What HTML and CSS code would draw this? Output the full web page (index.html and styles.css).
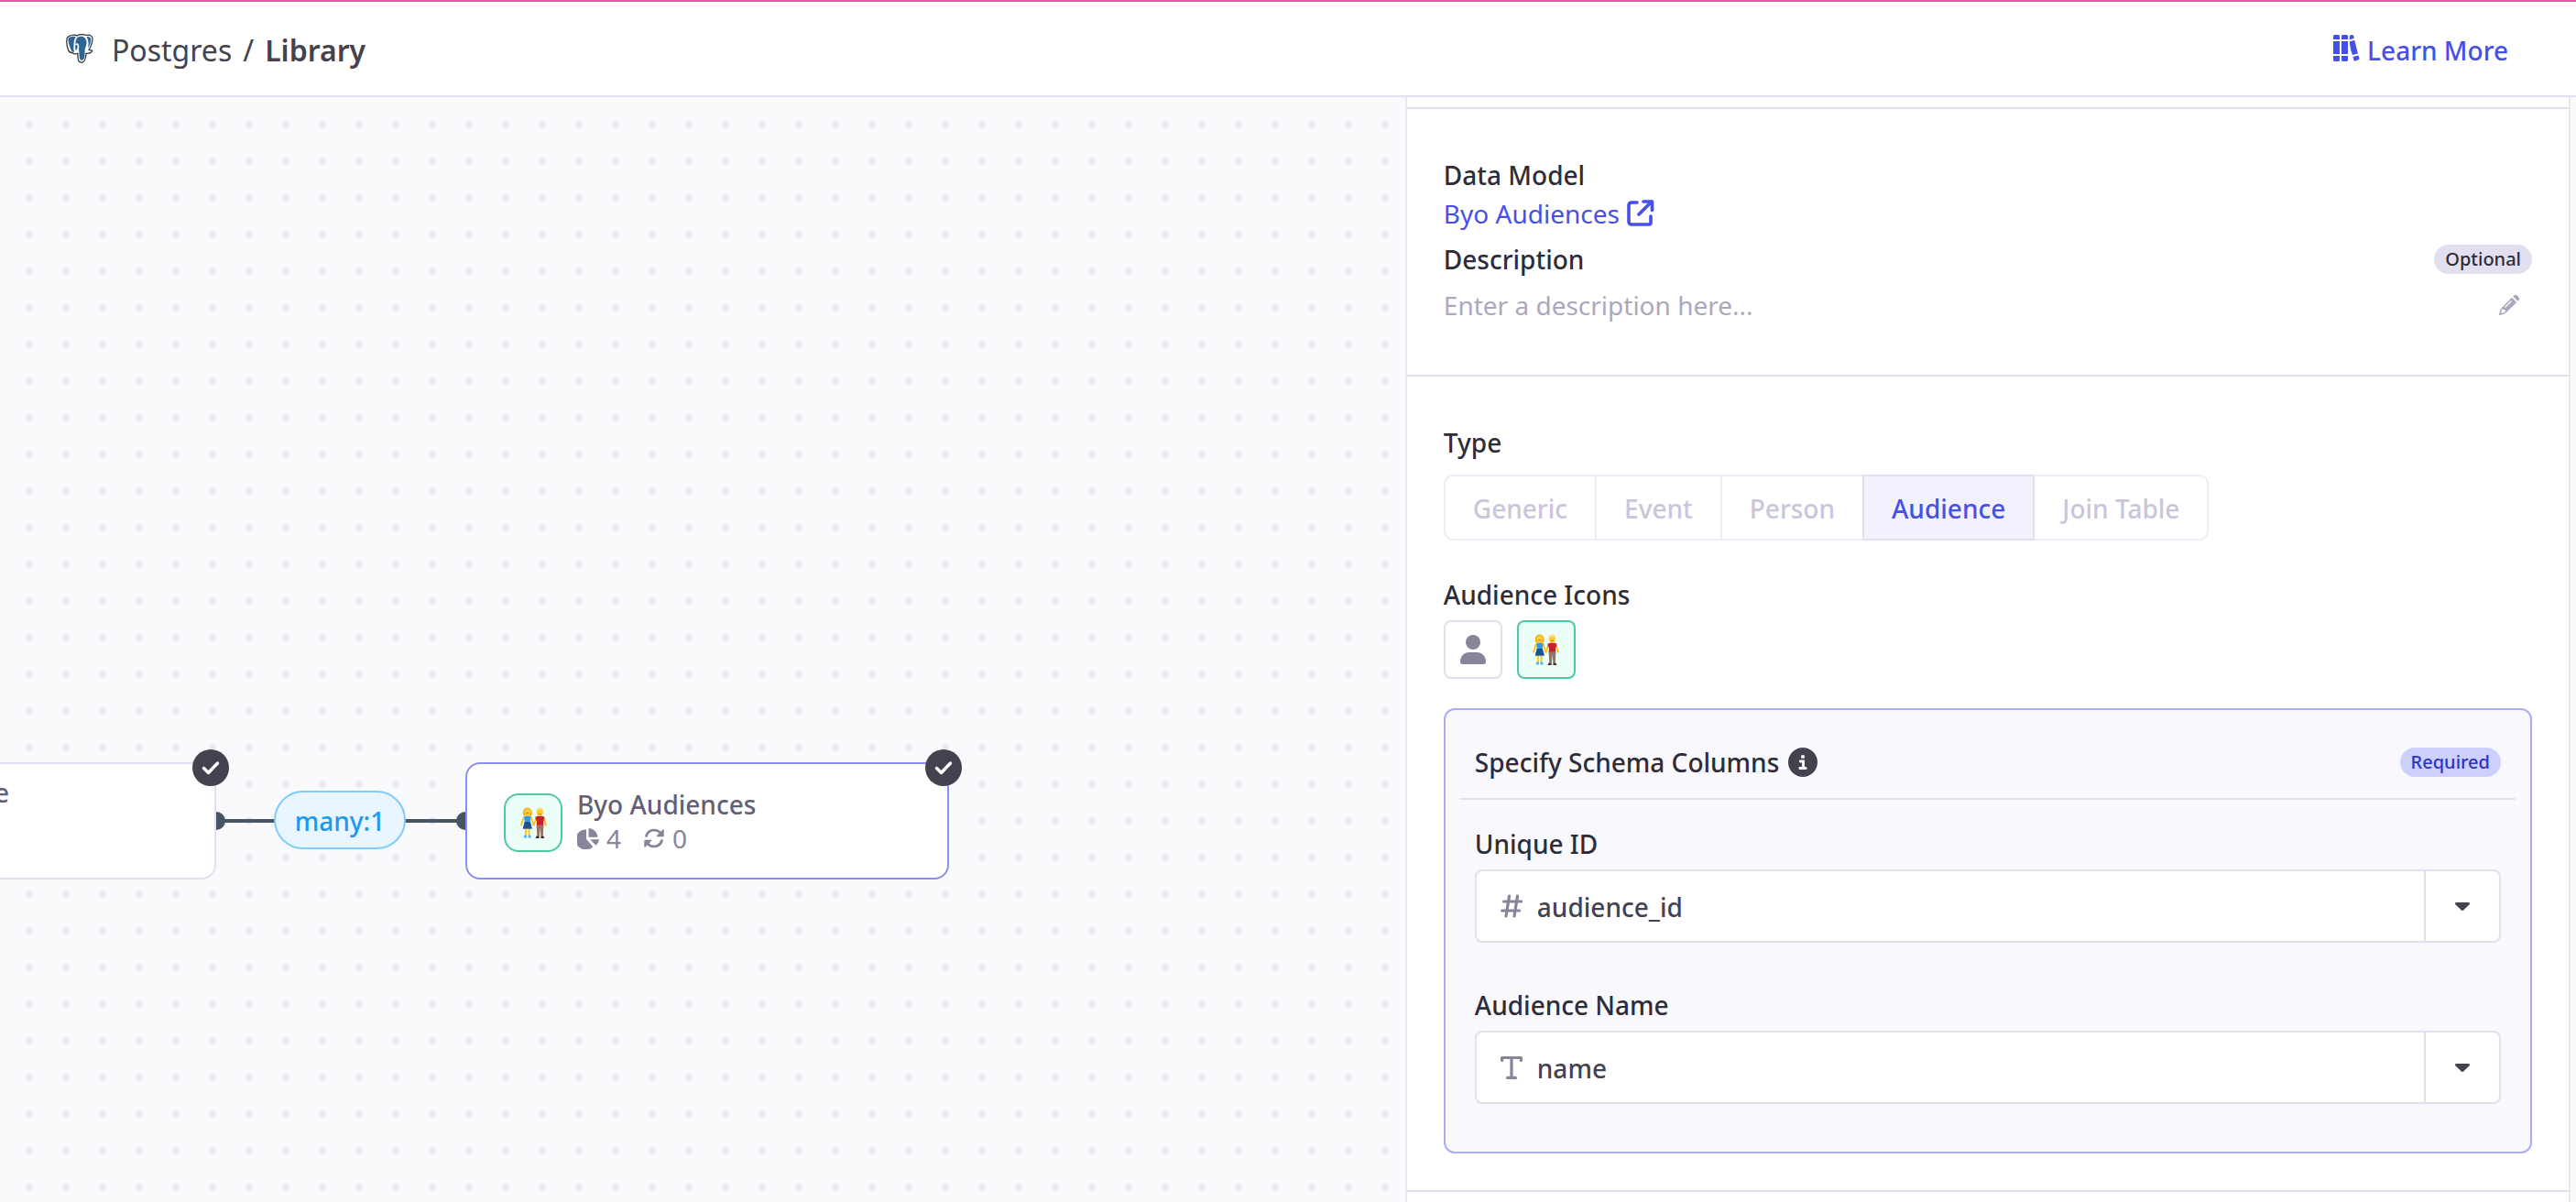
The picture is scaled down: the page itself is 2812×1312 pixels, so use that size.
FILE: index.html
```html
<!DOCTYPE html>
<html lang="en">
<head>
<meta charset="utf-8">
<meta name="viewport" content="width=device-width, initial-scale=1">
<title>Postgres / Library</title>
<link rel="stylesheet" href="styles.css">
</head>
<body>
<svg class="defs" aria-hidden="true">
  <symbol id="couple" viewBox="0 0 29 34">
    <path d="M3.6 11.5L1 19.5M11.8 11.5l2.6 8" stroke="#fbc21c" stroke-width="1.9" stroke-linecap="round"/>
    <path d="M5.9 22v10M9.6 22v10" stroke="#fdc92b" stroke-width="2.1"/>
    <path d="M4.6 30.4h2.3v3H3.4zM8.6 30.4h2.3l1.1 3H8.6z" fill="#4cb4ee"/>
    <path d="M4 10h7.6l-.9 6 2.1 7.4H2.8L4.8 16z" fill="#2f9be0"/>
    <path d="M4.7 16h6.1l2 7.4H2.8z" fill="#1f4f94"/>
    <path d="M3 8.4C2.2 3.4 4.4.6 7.7.6s5.7 2.8 4.9 7.8c-1 1.7-8.6 1.7-9.6 0z" fill="#f6a91a"/>
    <circle cx="7.8" cy="5.3" r="3.4" fill="#ffd23b"/>
    <path d="M6 6.6h3.6" stroke="#b06a17" stroke-width=".8"/>
    <path d="M17.5 12l-3 7.6M25.4 12l2.6 7.6" stroke="#fbc21c" stroke-width="2" stroke-linecap="round"/>
    <path d="M17.6 19.5h7.8l-.6 12.2h-2.4l-.8-9-.8 9h-2.5z" fill="#957363"/>
    <path d="M17.6 31.5h3V34h-4.2zM22.4 31.5h2.8l1.2 2.5h-4z" fill="#4a2a24"/>
    <path d="M16.4 10.8c3-1.6 7-1.6 10 0l-.5 4-.9-.6.3 5.6h-7.6l.4-5.6-1 .6z" fill="#cc1f2c"/>
    <path d="M17.6 6.4C16.9 2.2 18.4.4 21.4.4s4.6 1.8 3.9 6z" fill="#fde28a"/>
    <circle cx="21.4" cy="6" r="3.5" fill="#ffcb2b"/>
    <path d="M19.8 7.4h3.2" stroke="#b06a17" stroke-width=".8"/>
  </symbol>
  <symbol id="check" viewBox="0 0 40 40">
    <circle cx="20" cy="20" r="20" fill="#45424f"/>
    <path d="M12.5 20.5l5 5L27.5 15" fill="none" stroke="#fff" stroke-width="3.4" stroke-linecap="round" stroke-linejoin="round"/>
  </symbol>
  <symbol id="caret" viewBox="0 0 16 9">
    <path d="M1.4 0h13.2c1.2 0 1.8 1.4 1 2.2L9.1 8.5c-.6.6-1.6.6-2.2 0L.4 2.2C-.4 1.4.2 0 1.4 0z" fill="#45424f"/>
  </symbol>
</svg>

<header class="topbar">
  <nav class="crumbs" aria-label="Breadcrumb">
    <svg class="logo" viewBox="0 0 30 31" aria-hidden="true">
      <path d="M2 3C5 .2 10 .4 12 1.4 15-.2 20-.1 22 1c3-.8 7 .3 7 3.400 0 5-2 9-4 12.600 1.400.7 3.700.2 3.700.9 0 1.800-3.500 3.300-6.700 2.900-.3 4-.6 8.400-3.600 9.600-2.800.9-4.900-.6-5.200-3.400l-.4-6.200c-2.600 1.300-5 .5-5.600-.7C2.700 21 1 14 .8 8.500.7 6 .8 4 2 3z" fill="#fff" stroke="#2c2c2c" stroke-width="1.200"/>
      <path d="M3 4C5.400 2 9 2 11 2.800 8.400 5.600 8.600 10 8.400 16c0 1.200.5 2 .8 2.700-1.200 1-2.600.5-3.200-.8C3.800 13.500 2.600 9 2.500 6.500c0-1 0-1.900.5-2.500zM13 3c3-1.200 6-.8 8 1.200 1.700 2.300 2 5.800.8 8.800-1.200 3-1.400 4.500-1.200 6.500 0 4-.3 8.200-2.800 8.700-2 .4-2.800-1-3-2.600-.4-4-.3-7.500-.9-9.300.6-2.300.6-4.200-.6-6-1-.8-2-.5-3 .2.200-3 .7-6.300 2.700-7.500zM22.500 2.700c2-.5 4.800.2 4.800 2.500 0 3.300-1.300 6.700-3.300 9.800.3-3 .9-4.500.4-7-.3-2-.8-3.700-1.900-5.300z" fill="#2f6594"/>
      <path d="M10.400 11.500c1.300-.7 2.300.3 2.300 1.800 0 1.900-.8 3.200-2 4.200-.6-1.600-.6-3.900-.3-6z" fill="#2f6594"/>
    </svg>
    <a href="#postgres" class="crumb">Postgres</a>
    <span class="crumb">/</span>
    <span class="crumb crumb-current" aria-current="page">Library</span>
  </nav>
  <a href="#learn" class="learn">
    <svg class="icon-lg" viewBox="0 0 30 30" fill="currentColor" aria-hidden="true">
      <path d="M2.500 0h4A1.500 1.500 0 0 1 8 1.500V5H1V1.500A1.500 1.500 0 0 1 2.500 0zM1 7h7v14H1zM1 23h7v4.500A1.500 1.500 0 0 1 6.500 29h-4A1.500 1.500 0 0 1 1 27.500zM11.500 0h4A1.500 1.500 0 0 1 17 1.500V5h-7V1.500A1.500 1.500 0 0 1 11.500 0zM10 7h7v14h-7zM10 23h7v4.500a1.500 1.500 0 0 1-1.500 1.500h-4a1.500 1.500 0 0 1-1.500-1.500z"/>
      <path d="M18.800 2.200c-.1-.8.3-1.500 1-1.700l1.600-.4c.8-.2 1.500.2 1.700 1l.7 2.700-5 1.700zM18.800 7.500l5.400-1.700L28 20.400l-6 1.700c-1.800-5-2.700-9-3.200-14.600zM22.500 24.100l6-1.700.9 3.200c.2.800-.2 1.500-1 1.700l-3.400 1.100c-.8.200-1.500-.2-1.700-1z"/>
    </svg>
    <span class="learn-text">Learn More</span>
  </a>
</header>

<main class="workspace">
  <section class="canvas" aria-label="Schema graph">
    <svg class="edge" width="280" height="20" viewBox="0 0 280 20" aria-hidden="true">
      <path d="M4 10h272" stroke="#455564" stroke-width="4"/>
      <circle cx="4" cy="10" r="10" fill="#455564"/>
      <circle cx="276" cy="10" r="10" fill="#455564"/>
    </svg>
    <span class="relation">many:1</span>
    <article class="node node-source">
      <h2 class="node-title">e</h2>
      <svg class="node-check" aria-hidden="true"><use href="#check"/></svg>
    </article>
    <article class="node node-selected">
      <span class="node-icon"><svg class="couple" aria-hidden="true"><use href="#couple"/></svg></span>
      <div>
        <h2 class="node-title">Byo Audiences</h2>
        <p class="stats">
          <svg class="stat-icon" viewBox="0 0 24 24" fill="currentColor" aria-hidden="true">
            <path d="M10 2.500v10.300l7.200 8.400A11 11 0 1 1 10 2.500z"/>
            <path d="M12.500 1a10.300 10.300 0 0 1 10 9.800h-10z"/>
            <path d="M14 13.200h10a11 11 0 0 1-3.400 6.600z"/>
          </svg>
          <span class="stat">4</span>
          <svg class="stat-icon" viewBox="0 0 24 24" fill="none" stroke="currentColor" stroke-width="2.800" stroke-linecap="round" aria-hidden="true">
            <path d="M3.500 9.500A9 9 0 0 1 19.500 7M20.500 14.500A9 9 0 0 1 4.500 17"/>
            <path d="M22 3v6.500h-6.500zM2 21v-6.500h6.500z" fill="currentColor" stroke-width="1.500" stroke-linejoin="round"/>
          </svg>
          <span>0</span>
        </p>
      </div>
      <svg class="node-check" aria-hidden="true"><use href="#check"/></svg>
    </article>
  </section>

  <aside class="panel">
    <div class="panel-body">
      <section class="block details">
        <div>
          <h3 class="label">Data Model</h3>
          <a href="#model" class="model-link">Byo Audiences
            <svg class="icon-lg" viewBox="0 0 30 30" fill="none" stroke="currentColor" stroke-width="3.600" stroke-linecap="round" stroke-linejoin="round" aria-hidden="true">
              <path d="M11 3H5a3 3 0 0 0-3 3v18a3 3 0 0 0 3 3h19a2 2 0 0 0 2-2v-7M13 16L27 2M18 2h9.500v9.500"/>
            </svg>
          </a>
        </div>
        <div class="row">
          <label class="label" for="description">Description</label>
          <span class="badge">Optional</span>
        </div>
        <div class="row">
          <input class="description" id="description" type="text" placeholder="Enter a description here...">
          <button class="edit" type="button" aria-label="Edit description">
            <svg class="pencil" viewBox="0 0 22 22" aria-hidden="true">
              <path d="M13.900 2.800l5.300 5.300L7.600 19.600c-.6.6-1.400 1-2.200 1.200L.8 22c-.5.100-.9-.3-.8-.8L1.300 16.600c.2-.8.600-1.500 1.200-2.100zM15.200 1.500l.9-.8c1.200-1.100 2.800-1 3.900.1l1.200 1.200c1.100 1.100 1.200 2.700.1 3.900l-.8.900z" fill="#aba7bf"/>
              <path d="M6.500 13.500L13.500 6.500M3.600 16l-.7 3.100 3.100-.7.2-1.600-2-.2z" fill="#fff" stroke="#fff" stroke-width="1.200"/>
            </svg>
          </button>
        </div>
      </section>

      <section class="block config">
        <h3 class="label" id="type-label">Type</h3>
        <div class="segments" role="group" aria-labelledby="type-label">
          <button class="segment" type="button" disabled>Generic</button>
          <button class="segment" type="button" disabled>Event</button>
          <button class="segment" type="button" disabled>Person</button>
          <button class="segment segment-on" type="button" aria-pressed="true">Audience</button>
          <button class="segment" type="button" disabled>Join Table</button>
        </div>

        <h3 class="label" id="icons-label">Audience Icons</h3>
        <div class="icon-options" role="group" aria-labelledby="icons-label">
          <button class="icon-option" type="button" aria-label="Person">
            <svg class="person" viewBox="0 0 28 32" fill="#898499" aria-hidden="true"><circle cx="14" cy="8" r="8"/><path d="M10 19h8c6 0 10 4.500 10 10.500 0 1.500-.9 2.500-2.300 2.500H2.300C.9 32 0 31 0 29.500 0 23.500 4 19 10 19z"/></svg>
          </button>
          <button class="icon-option icon-option-on" type="button" aria-label="Couple" aria-pressed="true">
            <svg class="couple" aria-hidden="true"><use href="#couple"/></svg>
          </button>
        </div>

        <div class="schema">
          <div class="schema-head">
            <h3 class="label">Specify Schema Columns
              <svg class="info" viewBox="0 0 32 32" aria-hidden="true"><circle cx="16" cy="16" r="16" fill="#45424f"/><circle cx="16" cy="10" r="2.100" fill="#fff"/><path d="M13.300 15h3.200v7.500M12.800 22.500h6.400" fill="none" stroke="#fff" stroke-width="2.800" stroke-linecap="round"/></svg>
            </h3>
            <span class="badge badge-required">Required</span>
          </div>
          <div class="field">
            <label class="label" for="unique-id">Unique ID</label>
            <div class="select">
              <select id="unique-id"><option>audience_id</option></select>
              <svg class="select-icon" viewBox="0 0 24 26" fill="none" stroke="#898499" stroke-width="3.200" stroke-linecap="round" aria-hidden="true"><path d="M9.500 2L6 24M18.500 2L15 24M3.500 8h19M1.600 18h19"/></svg>
              <span class="select-caret"><svg class="caret" aria-hidden="true"><use href="#caret"/></svg></span>
            </div>
          </div>
          <div class="field">
            <label class="label" for="audience-name">Audience Name</label>
            <div class="select">
              <select id="audience-name"><option>name</option></select>
              <svg class="select-icon" viewBox="0 0 24 26" fill="none" stroke="#898499" stroke-width="3.200" stroke-linecap="round" stroke-linejoin="round" aria-hidden="true"><path d="M1.600 5.500V2.500h20.800v3M12 3v21M7.500 24.300h9"/></svg>
              <span class="select-caret"><svg class="caret" aria-hidden="true"><use href="#caret"/></svg></span>
            </div>
          </div>
        </div>
      </section>
    </div>
    <div class="scroll-track"></div>
  </aside>
</main>
</body>
</html>
```
FILE: styles.css
```css
* { box-sizing: border-box; }

body {
  margin: 0;
  height: 100vh;
  display: flex;
  flex-direction: column;
  overflow: hidden;
  background: #fff;
  color: #2e2c38;
  font: 400 28px/42px "Noto Sans", sans-serif;
}

h2, h3, p { margin: 0; font-size: inherit; font-weight: inherit; }
a { color: inherit; text-decoration: none; }
svg { flex: none; display: block; }
button, input, select { font: inherit; color: inherit; }
button { margin: 0; padding: 0; background: none; cursor: pointer; }
.defs { position: absolute; width: 0; height: 0; }

.topbar {
  flex: none;
  display: flex;
  align-items: center;
  justify-content: space-between;
  height: 106px;
  padding: 0 74px 0 72px;
  border-top: 2px solid #ef55a5;
  border-bottom: 2px solid #e1dff0;
}
.crumbs { display: flex; align-items: center; gap: 12px; color: #45424f; font-size: 32px; }
.logo { width: 30px; height: 32px; margin-right: 8px; }
.crumb, .learn-text { padding-top: 3px; }
.crumb-current { font-weight: 600; }
.learn { display: flex; align-items: center; gap: 8px; color: #4750e6; font-weight: 500; }
.icon-lg { width: 30px; height: 30px; }

.workspace {
  flex: 1;
  min-height: 0;
  display: grid;
  grid-template-columns: minmax(0, 6fr) minmax(0, 5fr);
}

.canvas {
  position: relative;
  overflow: hidden;
  background: radial-gradient(circle, #ebe9f3 4px, transparent 4px) 12px 10px / 40px 40px #f9fafc;
}
.node {
  position: absolute;
  top: 726px;
  height: 128px;
  display: flex;
  background: #fff;
  border: 2px solid #e1dff0;
  border-radius: 16px;
}
.node-source { left: -292px; width: 528px; justify-content: flex-end; padding: 12px 224px 0 0; }
.node-selected { left: 508px; width: 528px; gap: 16px; padding: 25px 40px; border-color: #8a8ff5; }
.node-title { color: #645f76; font-weight: 500; line-height: 38px; }
.node-check { position: absolute; top: -16px; right: -16px; width: 40px; height: 40px; }
.node-icon {
  display: grid;
  place-items: center;
  width: 64px;
  height: 64px;
  margin-top: 7px;
  background: #ebfef7;
  border: 2px solid #4ccb98;
  border-radius: 16px;
}
.couple { width: 29px; height: 34px; }
.stats { display: flex; align-items: center; gap: 8px; color: #898499; line-height: 36px; }
.stat-icon { width: 24px; height: 24px; }
.stat { margin-right: 16px; }
.edge { position: absolute; left: 232px; top: 780px; overflow: visible; }
.relation {
  position: absolute;
  left: 299px;
  top: 757px;
  width: 144px;
  height: 64px;
  border: 2px solid #82cbff;
  border-radius: 32px;
  background: #e9f6ff;
  color: #1d98f2;
  font-weight: 500;
  line-height: 62px;
  text-align: center;
}

.panel { display: flex; border-left: 2px solid #ebe9f5; }
.panel-body { flex: 1; min-width: 0; padding-top: 11px; overflow: hidden; }
.scroll-track { width: 8px; background: #fafafa; border-left: 2px solid #e8e8e8; }
.block { border-top: 2px solid #e1dff0; padding: 51px 40px 0; }
.label { font-weight: 500; }
.details { display: flex; flex-direction: column; gap: 8px; padding-bottom: 55px; }
.model-link { display: flex; align-items: center; gap: 8px; color: #4750e6; }
.row { display: flex; align-items: center; justify-content: space-between; }
.badge {
  padding: 0 12px;
  border-radius: 16px;
  background: #e1dff0;
  font-size: 20px;
  font-weight: 500;
  line-height: 32px;
}
.badge-required { background: #cdd0fd; color: #2d34c1; }
.description { flex: 1; height: 42px; padding: 0; border: 0; outline: 0; background: none; }
.description::placeholder { color: #aba7bf; opacity: 1; }
.edit { padding: 0 14px; border: 0; }
.pencil { width: 22px; height: 22px; }

.config { padding-bottom: 40px; border-bottom: 2px solid #e1dff0; }
.segments { display: flex; margin: 14px 0 38px; }
.segment {
  height: 72px;
  padding: 2px 30px 0;
  border: 2px solid #ebedf7;
  background: #fff;
  color: #c9c5db;
  font-weight: 500;
}
.segment + .segment { border-left-width: 0; }
.segment:first-child { border-radius: 10px 0 0 10px; }
.segment:last-child { border-radius: 0 10px 10px 0; }
.segment + .segment-on {
  margin-left: -2px;
  border-left-width: 2px;
  border-color: #e1dff0;
  background: #f2f2fe;
  color: #4750e6;
}
.icon-options { display: flex; gap: 16px; margin: 7px 0 32px; }
.icon-option {
  display: grid;
  place-items: center;
  width: 64px;
  height: 64px;
  border: 2px solid #e1dff0;
  border-radius: 8px;
}
.icon-option-on { border-color: #4ccb98; background: #ebfef7; }
.person { width: 28px; height: 32px; }

.schema {
  padding: 0 16px 52px;
  border: 2px solid #a9adf8;
  border-radius: 12px;
  background: #f8f8fd;
}
.schema-head {
  display: flex;
  align-items: center;
  justify-content: space-between;
  padding: 36px 16px 18px;
  border-bottom: 2px solid #e1dff0;
}
.schema-head .label { display: flex; align-items: center; gap: 10px; }
.info { width: 32px; height: 32px; }
.field { display: flex; flex-direction: column; gap: 7px; padding: 27px 16px 0; }
.field + .field { padding-top: 47px; }
.select {
  display: grid;
  grid-template: 76px / 76px 1fr 82px;
  align-items: center;
  border: 2px solid #e1dff0;
  border-radius: 8px;
  background: #fff;
  color: #45424f;
  font-weight: 500;
}
.select select {
  grid-area: 1 / 1 / 2 / 4;
  width: 100%;
  height: 100%;
  padding: 2px 82px 0 66px;
  border: 0;
  background: none;
  appearance: none;
}
.select-icon { grid-area: 1 / 1; width: 24px; height: 26px; margin-left: 26px; pointer-events: none; }
.select-caret {
  grid-area: 1 / 3;
  display: grid;
  place-items: center;
  height: 100%;
  border-left: 2px solid #e1dff0;
  pointer-events: none;
}
.caret { width: 16px; height: 9px; }
```
